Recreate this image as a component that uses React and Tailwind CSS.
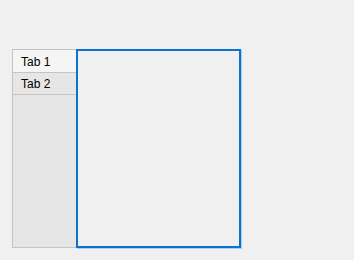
export default function App() {
  return (
    <div className="w-[354px] h-[260px] bg-[#f0f0f0] pl-[12px] pt-[49px]" style={{ fontFamily: '"Liberation Sans", Arial, sans-serif' }}>
      <div className="flex">
        <div className="w-[64px] h-[199px] border-l border-t border-b border-[#c4c4c4] bg-[#e6e6e6] flex flex-col">
          <div className="h-[23px] border-b border-[#c4c4c4] bg-[#f5f5f5] pl-[8px] pt-[1px] text-[12px] leading-[22px] text-black">Tab 1</div>
          <div className="h-[22px] border-b border-[#c4c4c4] pl-[8px] pt-[1px] text-[12px] leading-[21px] text-black">Tab 2</div>
        </div>
        <div className="w-[165px] h-[199px] border-2 border-[#0a74cc] shadow-[1px_1px_0_0_#a8cdee]"></div>
      </div>
    </div>
  );
}
